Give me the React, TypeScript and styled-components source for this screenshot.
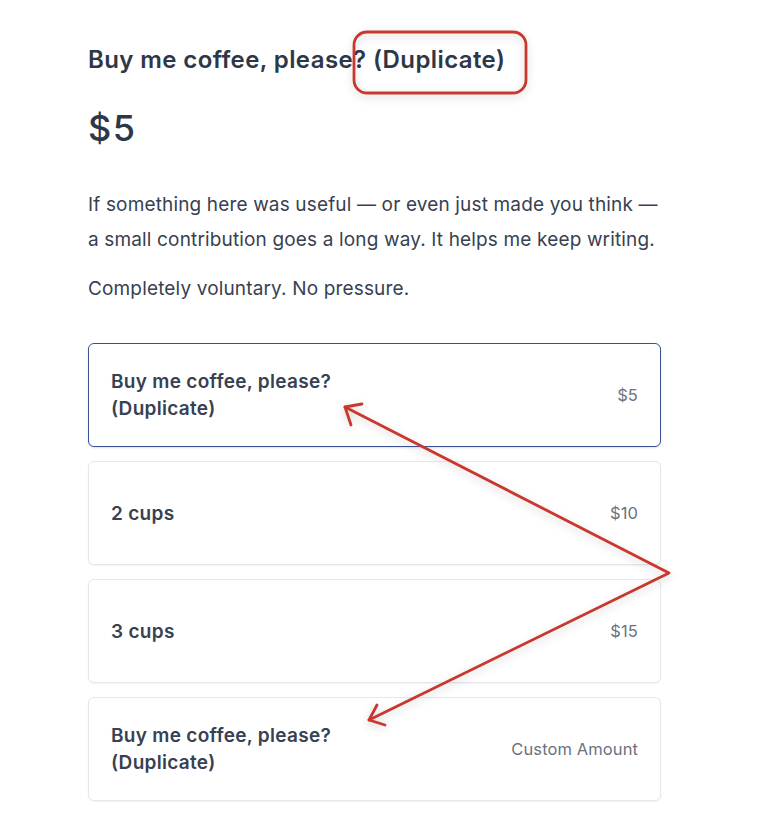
import React from "react";
import styled, { createGlobalStyle } from "styled-components";

const GlobalStyle = createGlobalStyle`
  html, body {
    margin: 0;
    padding: 0;
    background: #ffffff;
  }
  body {
    font-family: Inter, "Noto Sans", "Liberation Sans", sans-serif;
    color: #2d3748;
  }
`;

const Page = styled.div`
  position: relative;
  width: 760px;
  min-height: 814px;
  box-sizing: border-box;
  padding: 44px 0 0 88px;
  overflow: hidden;
`;

const Content = styled.div`
  width: 573px;
  display: flex;
  flex-direction: column;
`;

const Title = styled.h2`
  margin: 0;
  font-size: 24px;
  letter-spacing: 0.4px;
  line-height: 31px;
  font-weight: 600;
  color: #2d3748;
`;

const Amount = styled.div`
  margin-top: 32px;
  font-size: 36px;
  letter-spacing: 1.5px;
  line-height: 43px;
  font-weight: 500;
  color: #2d3748;
`;

const Paragraph = styled.p<{ $gap: number }>`
  margin: ${(p) => p.$gap}px 0 0;
  font-size: 19px;
  letter-spacing: 0.15px;
  line-height: 35px;
  font-weight: 400;
  color: #374151;
`;

const Options = styled.div`
  margin-top: 37px;
  display: flex;
  flex-direction: column;
  gap: 14px;
`;

const OptionCard = styled.div<{ $selected?: boolean }>`
  display: flex;
  align-items: center;
  justify-content: space-between;
  gap: 24px;
  box-sizing: border-box;
  min-height: 104px;
  padding: 0 22px;
  border-radius: 6px;
  background: #ffffff;
  border: ${(p) => (p.$selected ? "1.5px solid #3a5195" : "1px solid #e5e7eb")};
  box-shadow: ${(p) =>
    p.$selected ? "0 1px 2px rgba(30, 50, 110, 0.15)" : "0 1px 2px rgba(0, 0, 0, 0.05)"};
`;

const OptionName = styled.div`
  max-width: 300px;
  font-size: 19px;
  letter-spacing: 0.3px;
  line-height: 27px;
  font-weight: 600;
  color: #374151;
`;

const OptionPrice = styled.div`
  font-size: 16.5px;
  letter-spacing: 0.1px;
  font-weight: 400;
  color: #6b7280;
  white-space: nowrap;
`;

const Overlay = styled.svg`
  position: absolute;
  left: 0;
  top: 0;
  width: 760px;
  height: 814px;
  pointer-events: none;
`;

const options = [
  { name: "Buy me coffee, please? (Duplicate)", price: "$5", selected: true },
  { name: "2 cups", price: "$10" },
  { name: "3 cups", price: "$15" },
  { name: "Buy me coffee, please? (Duplicate)", price: "Custom Amount" },
];

export default function App() {
  return (
    <>
      <GlobalStyle />
      <Page>
        <Content>
          <Title>Buy me coffee, please? (Duplicate)</Title>
          <Amount>$5</Amount>
          <Paragraph $gap={37}>
            If something here was useful — or even just made you think — a small
            contribution goes a long way. It helps me keep writing.
          </Paragraph>
          <Paragraph $gap={14}>Completely voluntary. No pressure.</Paragraph>
          <Options>
            {options.map((o, i) => (
              <OptionCard key={i} $selected={o.selected}>
                <OptionName>{o.name}</OptionName>
                <OptionPrice>{o.price}</OptionPrice>
              </OptionCard>
            ))}
          </Options>
        </Content>
        <Overlay viewBox="0 0 760 814">
          <defs>
            <filter id="sh" x="-20%" y="-20%" width="140%" height="140%">
              <feDropShadow dx="0" dy="3" stdDeviation="4" floodColor="#000" floodOpacity="0.18" />
            </filter>
          </defs>
          <g filter="url(#sh)" fill="none" stroke="#c8372d" strokeLinecap="round" strokeLinejoin="round">
            <rect x="354" y="32" width="172" height="61" rx="13" strokeWidth="2.8" />
            <polyline points="345,407 669,573 369,720" strokeWidth="2.8" />
            <polyline points="362,404 345,407 351,425" strokeWidth="2.8" />
            <polyline points="385,725 369,720 377,705" strokeWidth="2.8" />
          </g>
        </Overlay>
      </Page>
    </>
  );
}
